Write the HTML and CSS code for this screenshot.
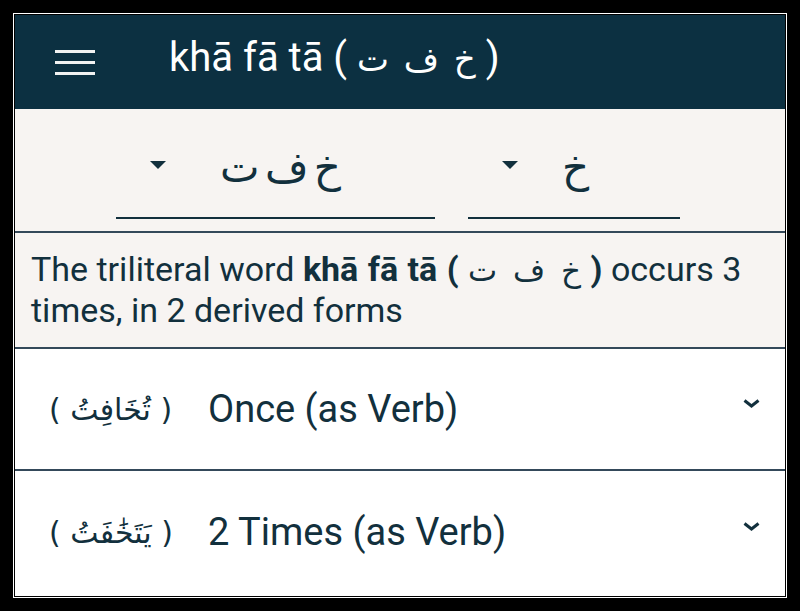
FILE: index.html
```html
<!DOCTYPE html>
<html lang="en">
<head>
    <meta charset="UTF-8">
    <meta name="viewport" content="width=device-width, initial-scale=1.0">
    <title>khā fā tā</title>
    <link rel="stylesheet" href="styles.css">
</head>
<body>

    <div class="frame">
        <div class="app">

            <header class="topbar">
                <button class="menu-btn" aria-label="Menu">
                    <span></span><span></span><span></span>
                </button>
                <h1 class="title">khā fā tā ( <span class="ar">خ ف ت</span> )</h1>
            </header>

            <section class="pickers">
                <div class="picker picker-root">
                    <span class="caret"></span>
                    <span class="picker-value ar">خ ف ت</span>
                </div>
                <div class="picker picker-letter">
                    <span class="caret"></span>
                    <span class="picker-value ar">خ</span>
                </div>
            </section>

            <section class="summary">
                <p>The triliteral word <b>khā fā tā ( <span class="ar">خ ف ت</span> )</b> occurs 3 times, in 2 derived forms</p>
            </section>

            <div class="form-row">
                <span class="form-word ar">( تُخَافِتُ )</span>
                <span class="form-count">Once (as Verb)</span>
                <svg class="chevron" viewBox="0 0 17 9" width="17" height="9">
                    <path d="M1.5 1.5 L8.5 7 L15.5 1.5" fill="none" stroke="#12303d" stroke-width="3"/>
                </svg>
            </div>

            <div class="form-row">
                <span class="form-word ar">( يَتَخَٰفَتُ )</span>
                <span class="form-count">2 Times (as Verb)</span>
                <svg class="chevron" viewBox="0 0 17 9" width="17" height="9">
                    <path d="M1.5 1.5 L8.5 7 L15.5 1.5" fill="none" stroke="#12303d" stroke-width="3"/>
                </svg>
            </div>

        </div>
    </div>

</body>
</html>
```

FILE: styles.css
```css
/* Reset */
* {
    margin: 0;
    padding: 0;
    box-sizing: border-box;
}

body {
    font-family: Roboto, "Noto Sans", Arial, sans-serif;
    background-color: #000;
    color: #12303d;
    padding: 13px;
    height: 611px;
}

.ar {
    font-family: "DejaVu Sans", sans-serif;
    unicode-bidi: isolate;
}

/* phone screenshot frame: thin white line then black gap */
.frame {
    border: 1px solid #fff;
    padding: 1px;
    background-color: #000;
    height: 585px;
}

.app {
    height: 100%;
    background-color: #fff;
    display: flex;
    flex-direction: column;
    overflow: hidden;
}

/* Top bar */
.topbar {
    background-color: #0c3041;
    height: 94px;
    display: flex;
    align-items: center;
    padding-left: 40px;
    flex-shrink: 0;
}

.menu-btn {
    background: none;
    border: none;
    width: 40px;
    display: flex;
    flex-direction: column;
    gap: 8px;
    margin-right: 74px;
}

.menu-btn span {
    display: block;
    height: 3px;
    background-color: #f2f2f2;
}

.title {
    color: #fff;
    font-weight: normal;
    font-size: 40px;
    margin-top: -10px;
}

.title .ar {
    font-size: 34px;
    word-spacing: 4px;
}

/* Root pickers */
.pickers {
    background-color: #f7f4f2;
    height: 124px;
    border-bottom: 2px solid #34495a;
    display: flex;
    align-items: flex-end;
    padding-left: 101px;
    padding-bottom: 12px;
    gap: 33px;
    flex-shrink: 0;
}

.picker {
    height: 80px;
    border-bottom: 2px solid #12303d;
    display: flex;
    align-items: center;
    padding-bottom: 22px;
}

.picker-root {
    width: 319px;
}

.picker-letter {
    width: 212px;
}

.caret {
    width: 0;
    height: 0;
    border-left: 8px solid transparent;
    border-right: 8px solid transparent;
    border-top: 8px solid #12303d;
    margin-left: 34px;
    margin-top: -4px;
}

.picker-value {
    font-size: 42px;
    color: #12303d;
}

.picker-root .picker-value {
    margin-left: 54px;
    word-spacing: -8px;
}

.picker-letter .picker-value {
    margin-left: 44px;
}

/* Summary line */
.summary {
    background-color: #f7f4f2;
    border-bottom: 2px solid #34495a;
    padding: 16px 16px 16px 16px;
    height: 116px;
    flex-shrink: 0;
}

.summary p {
    font-size: 34px;
    line-height: 40px;
}

.summary b {
    word-spacing: 1px;
}

.summary .ar {
    font-size: 31px;
    font-weight: normal;
    word-spacing: 6px;
}

/* Derived forms */
.form-row {
    height: 122px;
    border-bottom: 2px solid #34495a;
    display: flex;
    align-items: center;
    padding: 0 25px 0 34px;
    flex-shrink: 0;
}

.form-row:last-child {
    border-bottom: none;
}

.form-word {
    width: 159px;
    font-size: 30px;
}

.form-count {
    font-size: 38px;
    flex: 1;
}

.chevron {
    margin-top: -12px;
}
```
